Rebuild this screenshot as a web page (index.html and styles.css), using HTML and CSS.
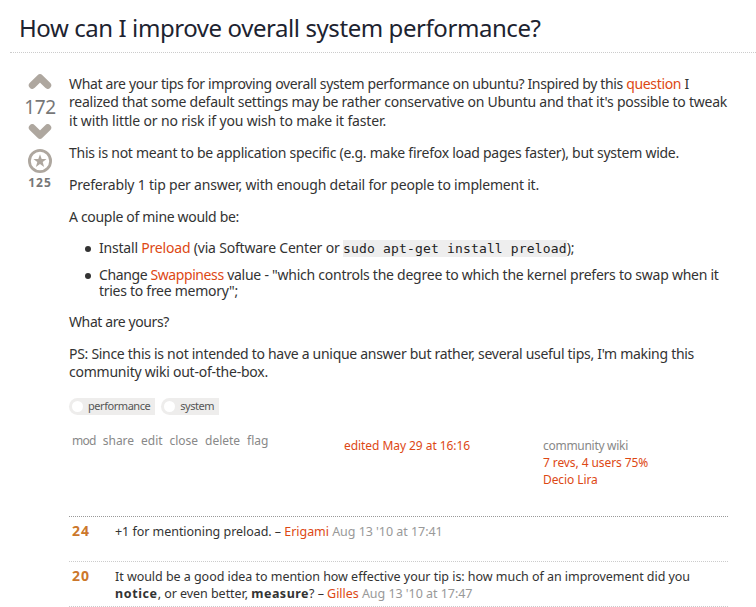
FILE: index.html
```
<!DOCTYPE html>
<html lang="en">
<head>
<meta charset="utf-8">
<title>How can I improve overall system performance?</title>
<link rel="stylesheet" href="styles.css">
</head>
<body>
<header class="question-header"><h1>How can I improve overall system performance?</h1></header>
<main class="question">
  <aside class="votes">
    <svg class="arrow" width="24" height="16" viewBox="0 0 24 16"><path d="M4.3 12.3 L12 4.8 L19.7 12.3"/></svg>
    <span class="vote-count">172</span>
    <svg class="arrow down" width="24" height="16" viewBox="0 0 24 16"><path d="M4.3 3.7 L12 11.2 L19.7 3.7"/></svg>
    <svg class="star" width="24" height="24" viewBox="0 0 24 24"><circle cx="12" cy="12" r="10.6"/><path d="M12 5.2 L13.7 10 L18.6 10.1 L14.7 13.1 L16.1 18 L12 15.1 L7.9 18 L9.3 13.1 L5.4 10.1 L10.3 10Z"/></svg>
    <span class="favorite-count">125</span>
  </aside>
  <div class="post">
    <div class="post-text">
      <p><span class="line t35">What are your tips for improving overall system performance on ubuntu? Inspired by this <a>question</a> I</span>
      <span class="line t25">realized that some default settings may be rather conservative on Ubuntu and that it's possible to tweak</span>
      <span class="line t15">it with little or no risk if you wish to make it faster.</span></p>
      <p><span class="line t26">This is not meant to be application specific (e.g. make firefox load pages faster), but system wide.</span></p>
      <p><span class="line t21">Preferably 1 tip per answer, with enough detail for people to implement it.</span></p>
      <p><span class="line t32">A couple of mine would be:</span></p>
      <ul>
        <li><span class="line t22">Install <a>Preload</a> (via Software Center or <code>sudo apt-get install preload</code>);</span></li>
        <li><span class="line t27"><span class="t40">Change <a>Swappiness</a></span> value - "which controls the degree to which the kernel prefers to swap when it</span>
        <span class="line t28">tries to free memory";</span></li>
      </ul>
      <p><span class="line t40">What are yours?</span></p>
      <p><span class="line t29">PS: Since this is not intended to have a unique answer but rather, several useful tips, I'm making this</span>
      <span class="line t23">community wiki out-of-the-box.</span></p>
    </div>
    <div class="tags"><a class="tag">performance</a><a class="tag">system</a></div>
    <div class="post-info">
      <nav class="menu"><a class="mod">mod</a><a>share</a><a>edit</a><a>close</a><a>delete</a><a>flag</a></nav>
      <a class="edited">edited May 29 at 16:16</a>
      <div class="owner"><span>community wiki</span><a>7 revs, 4 users 75%</a><a>Decio Lira</a></div>
    </div>
    <section class="comments">
      <div class="comment"><b class="score">24</b><p><span class="line">+1 for mentioning preload. – <a>Erigami</a> <time>Aug 13 '10 at 17:41</time></span></p></div>
      <div class="comment"><b class="score">20</b><p><span class="line">It would be a good idea to mention how effective your tip is: how much of an improvement did you</span>
      <span class="line"><b class="notice">notice</b>, or even better, <b class="measure">measure</b>? – <a>Gilles</a> <time>Aug 13 '10 at 17:47</time></span></p></div>
    </section>
  </div>
</main>
</body>
</html>
```
FILE: styles.css
```
* { box-sizing: border-box; }
body { margin: 0; height: 607px; overflow: hidden; background: #fff; color: #333; font: 14px/18.2px "Noto Sans", sans-serif; }
a { color: #dd4814; }
h1, p, ul { margin: 0; padding: 0; }
.question-header { height: 53px; margin-left: 10px; padding: 11px 0 0 9px; border-bottom: 1px dotted #ccc; }
h1 { color: #1d2330; font-size: 24px; font-weight: 400; line-height: 34px; letter-spacing: -.425px; white-space: nowrap; }
.question { display: flex; padding: 20px 28px 0 19px; }
.votes { width: 42px; margin-right: 8px; display: flex; flex-direction: column; align-items: center; }
.arrow { fill: none; stroke: #aea79f; stroke-width: 7; stroke-linecap: round; stroke-linejoin: round; }
.vote-count { color: #777; font-size: 19px; line-height: 24px; height: 26px; padding-top: 6px; letter-spacing: -.3px; }
.down { margin-top: 9px; }
.star { margin-top: 9px; fill: #aea79f; }
.star circle { fill: none; stroke: #aea79f; stroke-width: 2.8; }
.favorite-count { color: #777; font-size: 12px; font-weight: 700; line-height: 20px; letter-spacing: 1px; }
.post { width: 659px; }
.line { display: block; white-space: nowrap; }
.post-text { height: 309px; padding-top: 2.2px; }
.post-text p { margin-bottom: 13.8px; }
.post-text ul { margin: 0 0 14.5px; padding-left: 30px; line-height: 16px; list-style: none; }
.post-text li { position: relative; margin-bottom: 11px; }
.post-text li::before { content: ""; position: absolute; left: -14px; top: 6px; width: 6px; height: 6px; background: #333; border-radius: 50%; }
code { display: inline-block; height: 17px; background: #eee; color: #222; font: 13px/17px "DejaVu Sans Mono", monospace; letter-spacing: .17px; vertical-align: baseline; margin: -1px 0; }
.t15 { letter-spacing: -.147px; }
.t21 { letter-spacing: -.206px; }
.t22 { letter-spacing: -.2px; }
.t23 { letter-spacing: -.234px; }
.t25 { letter-spacing: -.247px; }
.t26 { letter-spacing: -.263px; }
.t27 { letter-spacing: -.25px; }
.t28 { letter-spacing: -.278px; }
.t29 { letter-spacing: -.293px; }
.t32 { letter-spacing: -.317px; }
.t35 { letter-spacing: -.351px; }
.t40 { letter-spacing: -.397px; }
.tags { display: flex; gap: 6px; margin-top: 15.8px; }
.tag { height: 17px; display: flex; align-items: center; padding-right: 5px; background: #eeedec; border-radius: 9px 0 0 9px; color: #555; font-size: 11px; letter-spacing: -.45px; }
.tag::before { content: ""; width: 11px; height: 11px; margin: 0 5px 0 3px; background: #fff; border-radius: 50%; }
.post-info { display: flex; height: 101px; padding-top: 22px; font-size: 12px; line-height: 17px; color: #888; }
.menu { width: 275px; padding-left: 3px; display: flex; gap: 7px; margin-top: -5px; letter-spacing: -.02px; }
.menu a { color: #888; }
.menu .mod { letter-spacing: -.7px; }
.edited { width: 199px; letter-spacing: -.06px; }
.owner { display: flex; flex-direction: column; letter-spacing: -.09px; }
.owner span { letter-spacing: -.286px; }
.comments { border-top: 1px dotted #999; }
.comment { display: flex; height: 45px; padding-top: 6px; border-bottom: 1px dotted #ccc; font-size: 12.5px; line-height: 17px; letter-spacing: -.04px; }
.score { width: 46px; padding-left: 3px; color: #cc772b; font-size: 14px; line-height: 16px; letter-spacing: .9px; }
.comment time { color: #999; }
.notice { letter-spacing: .6px; }
.measure { letter-spacing: .5px; }
```
